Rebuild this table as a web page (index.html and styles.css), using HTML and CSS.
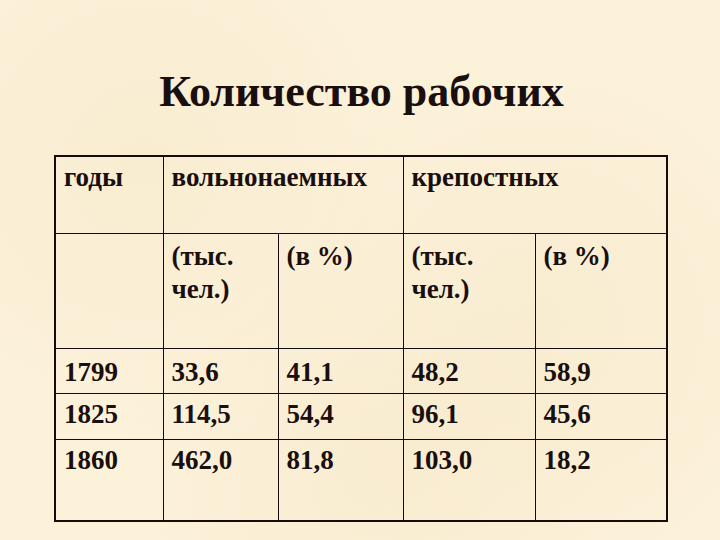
FILE: index.html
```html
<!DOCTYPE html>
<html lang="ru">
<head>
<meta charset="utf-8">
<link rel="stylesheet" href="styles.css">
</head>
<body>
<div class="slide">
  <h1 class="title">Количество рабочих</h1>
  <table class="data">
    <colgroup>
      <col class="c1"><col class="c2"><col class="c3"><col class="c4"><col class="c5">
    </colgroup>
    <tr class="r1">
      <td>годы</td>
      <td colspan="2">вольнонаемных</td>
      <td colspan="2">крепостных</td>
    </tr>
    <tr class="r2">
      <td></td>
      <td>(тыс.<br>чел.)</td>
      <td>(в %)</td>
      <td>(тыс.<br>чел.)</td>
      <td>(в %)</td>
    </tr>
    <tr class="r3">
      <td>1799</td><td>33,6</td><td>41,1</td><td>48,2</td><td>58,9</td>
    </tr>
    <tr class="r4">
      <td>1825</td><td>114,5</td><td>54,4</td><td>96,1</td><td>45,6</td>
    </tr>
    <tr class="r5">
      <td>1860</td><td>462,0</td><td>81,8</td><td>103,0</td><td>18,2</td>
    </tr>
  </table>
</div>
</body>
</html>
```

FILE: styles.css
```css
html, body {
  margin: 0;
  padding: 0;
}
body {
  background: #fcf2da;
  font-family: "Liberation Serif", "Times New Roman", serif;
  color: #1a0f0f;
}
.slide {
  width: 720px;
  height: 540px;
  box-sizing: border-box;
  padding-top: 67px;
  background-color: #fcf2da;
  background-image:
    radial-gradient(circle at 20% 30%, rgba(230,205,160,0.16) 0, rgba(230,205,160,0) 40%),
    radial-gradient(circle at 75% 60%, rgba(230,205,160,0.16) 0, rgba(230,205,160,0) 45%),
    radial-gradient(circle at 50% 90%, rgba(230,205,160,0.14) 0, rgba(230,205,160,0) 40%);
}
.title {
  margin: 0;
  text-align: center;
  font-size: 44px;
  line-height: 50px;
  font-weight: bold;
  padding-left: 3px;
}
.data {
  margin: 38px 0 0 54px;
  border-collapse: collapse;
  table-layout: fixed;
  width: 612px;
  border: 2px solid #140c0c;
}
.c1 { width: 108px; }
.c2 { width: 115px; }
.c3 { width: 125px; }
.c4 { width: 132px; }
.c5 { width: 132px; }
.data td {
  border: 1px solid #140c0c;
  vertical-align: top;
  padding: 4px 8px 0 8px;
  font-size: 27px;
  line-height: 33px;
  font-weight: bold;
  box-sizing: border-box;
}
.r1 td { height: 77px; }
.r2 td { height: 115px; padding-top: 6px; }
.r3 td { height: 45px; padding-top: 7px; }
.r4 td { height: 46px; padding-top: 4px; }
.r5 td { height: 82px; padding-top: 4px; }
```
